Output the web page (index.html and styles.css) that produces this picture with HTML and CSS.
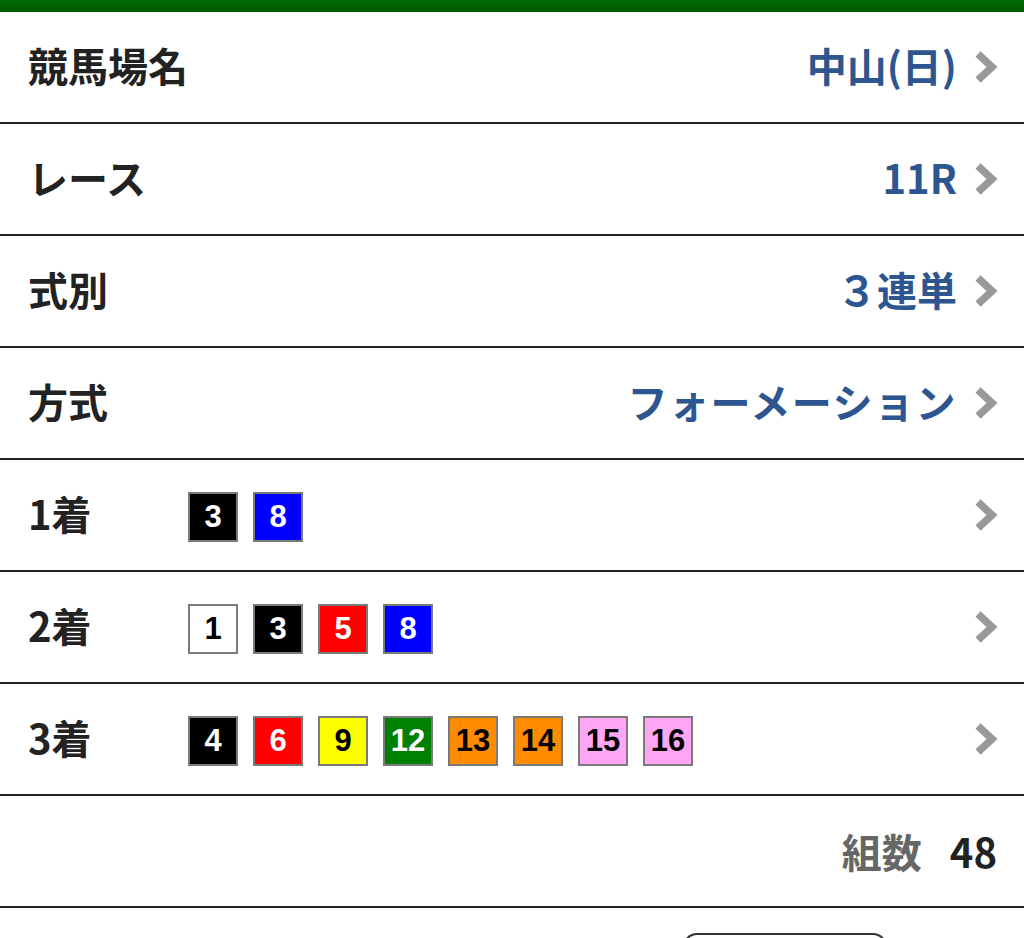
FILE: index.html
```html
<!DOCTYPE html>
<html lang="ja">
<head>
<meta charset="utf-8">
<link rel="stylesheet" href="styles.css">
</head>
<body>
<div class="topbar"></div>
<div class="row">
  <span class="label">競馬場名</span>
  <span class="value">中山(日)</span>
  <svg class="chev" viewBox="0 0 22 32"><path d="M3 3 L17 16 L3 29" fill="none" stroke="#999" stroke-width="7.5"/></svg>
</div>
<div class="row">
  <span class="label">レース</span>
  <span class="value">11R</span>
  <svg class="chev" viewBox="0 0 22 32"><path d="M3 3 L17 16 L3 29" fill="none" stroke="#999" stroke-width="7.5"/></svg>
</div>
<div class="row">
  <span class="label">式別</span>
  <span class="value">３連単</span>
  <svg class="chev" viewBox="0 0 22 32"><path d="M3 3 L17 16 L3 29" fill="none" stroke="#999" stroke-width="7.5"/></svg>
</div>
<div class="row">
  <span class="label">方式</span>
  <span class="value kana">フォーメーション</span>
  <svg class="chev" viewBox="0 0 22 32"><path d="M3 3 L17 16 L3 29" fill="none" stroke="#999" stroke-width="7.5"/></svg>
</div>
<div class="row">
  <span class="label col">1着</span>
  <div class="badges">
    <span class="badge b-black">3</span>
    <span class="badge b-blue">8</span>
  </div>
  <svg class="chev" viewBox="0 0 22 32"><path d="M3 3 L17 16 L3 29" fill="none" stroke="#999" stroke-width="7.5"/></svg>
</div>
<div class="row">
  <span class="label col">2着</span>
  <div class="badges">
    <span class="badge b-white">1</span>
    <span class="badge b-black">3</span>
    <span class="badge b-red">5</span>
    <span class="badge b-blue">8</span>
  </div>
  <svg class="chev" viewBox="0 0 22 32"><path d="M3 3 L17 16 L3 29" fill="none" stroke="#999" stroke-width="7.5"/></svg>
</div>
<div class="row">
  <span class="label col">3着</span>
  <div class="badges">
    <span class="badge b-black">4</span>
    <span class="badge b-red">6</span>
    <span class="badge b-yellow">9</span>
    <span class="badge b-green">12</span>
    <span class="badge b-orange">13</span>
    <span class="badge b-orange">14</span>
    <span class="badge b-pink">15</span>
    <span class="badge b-pink">16</span>
  </div>
  <svg class="chev" viewBox="0 0 22 32"><path d="M3 3 L17 16 L3 29" fill="none" stroke="#999" stroke-width="7.5"/></svg>
</div>
<div class="row total">
  <span class="total-label">組数</span>
  <span class="total-num">48</span>
</div>
<div class="footer">
  <div class="btn"></div>
</div>
</body>
</html>
```

FILE: styles.css
```css
html, body {
  margin: 0;
  padding: 0;
  background: #fff;
  overflow: hidden;
}
body {
  font-family: "Noto Sans CJK JP", "Noto Sans", sans-serif;
  color: #222;
}
.topbar {
  height: 12px;
  background: linear-gradient(#006a00, #005a00);
}
.row {
  display: flex;
  align-items: center;
  height: 110px;
  border-bottom: 2px solid #222;
  padding: 0 27px 0 28px;
}
.label {
  font-size: 40px;
  font-weight: 700;
  color: #222;
  line-height: 1;
  margin-bottom: 4px;
}
.label.col {
  width: 160px;
  flex: none;
}
.value {
  margin-left: auto;
  font-size: 40px;
  font-weight: 700;
  color: #2d5590;
  line-height: 1;
  margin-bottom: 4px;
}
.value.kana {
  letter-spacing: 1.5px;
}
.chev {
  width: 22px;
  height: 32px;
  margin-left: 18px;
  flex: none;
}
.badges {
  display: flex;
  gap: 15px;
  margin-right: auto;
  margin-top: 4px;
}
.badge {
  box-sizing: border-box;
  width: 50px;
  height: 50px;
  border: 2px solid #7a7a7a;
  display: flex;
  align-items: center;
  justify-content: center;
  font-family: "Liberation Sans", Arial, sans-serif;
  font-weight: 700;
  font-size: 31px;
}
.b-black { background: #000; color: #fff; }
.b-white { background: #fff; color: #000; }
.b-red { background: #ff0000; color: #fff; }
.b-blue { background: #0000ff; color: #fff; }
.b-yellow { background: #ffff00; color: #000; }
.b-green { background: #008000; color: #fff; }
.b-orange { background: #ff8c00; color: #000; }
.b-pink { background: #ffa6f5; color: #000; }
.total {
  justify-content: flex-end;
  gap: 28px;
}
.total-label {
  font-size: 40px;
  font-weight: 700;
  color: #666;
  line-height: 1;
}
.total-num {
  font-size: 40px;
  font-weight: 700;
  color: #222;
  line-height: 1;
}
.footer {
  display: flex;
  justify-content: flex-end;
  padding: 25px 137px 0 0;
}
.btn {
  width: 200px;
  height: 20px;
  border: 2px solid #333;
  border-bottom: none;
  border-radius: 14px 14px 0 0;
}
```
